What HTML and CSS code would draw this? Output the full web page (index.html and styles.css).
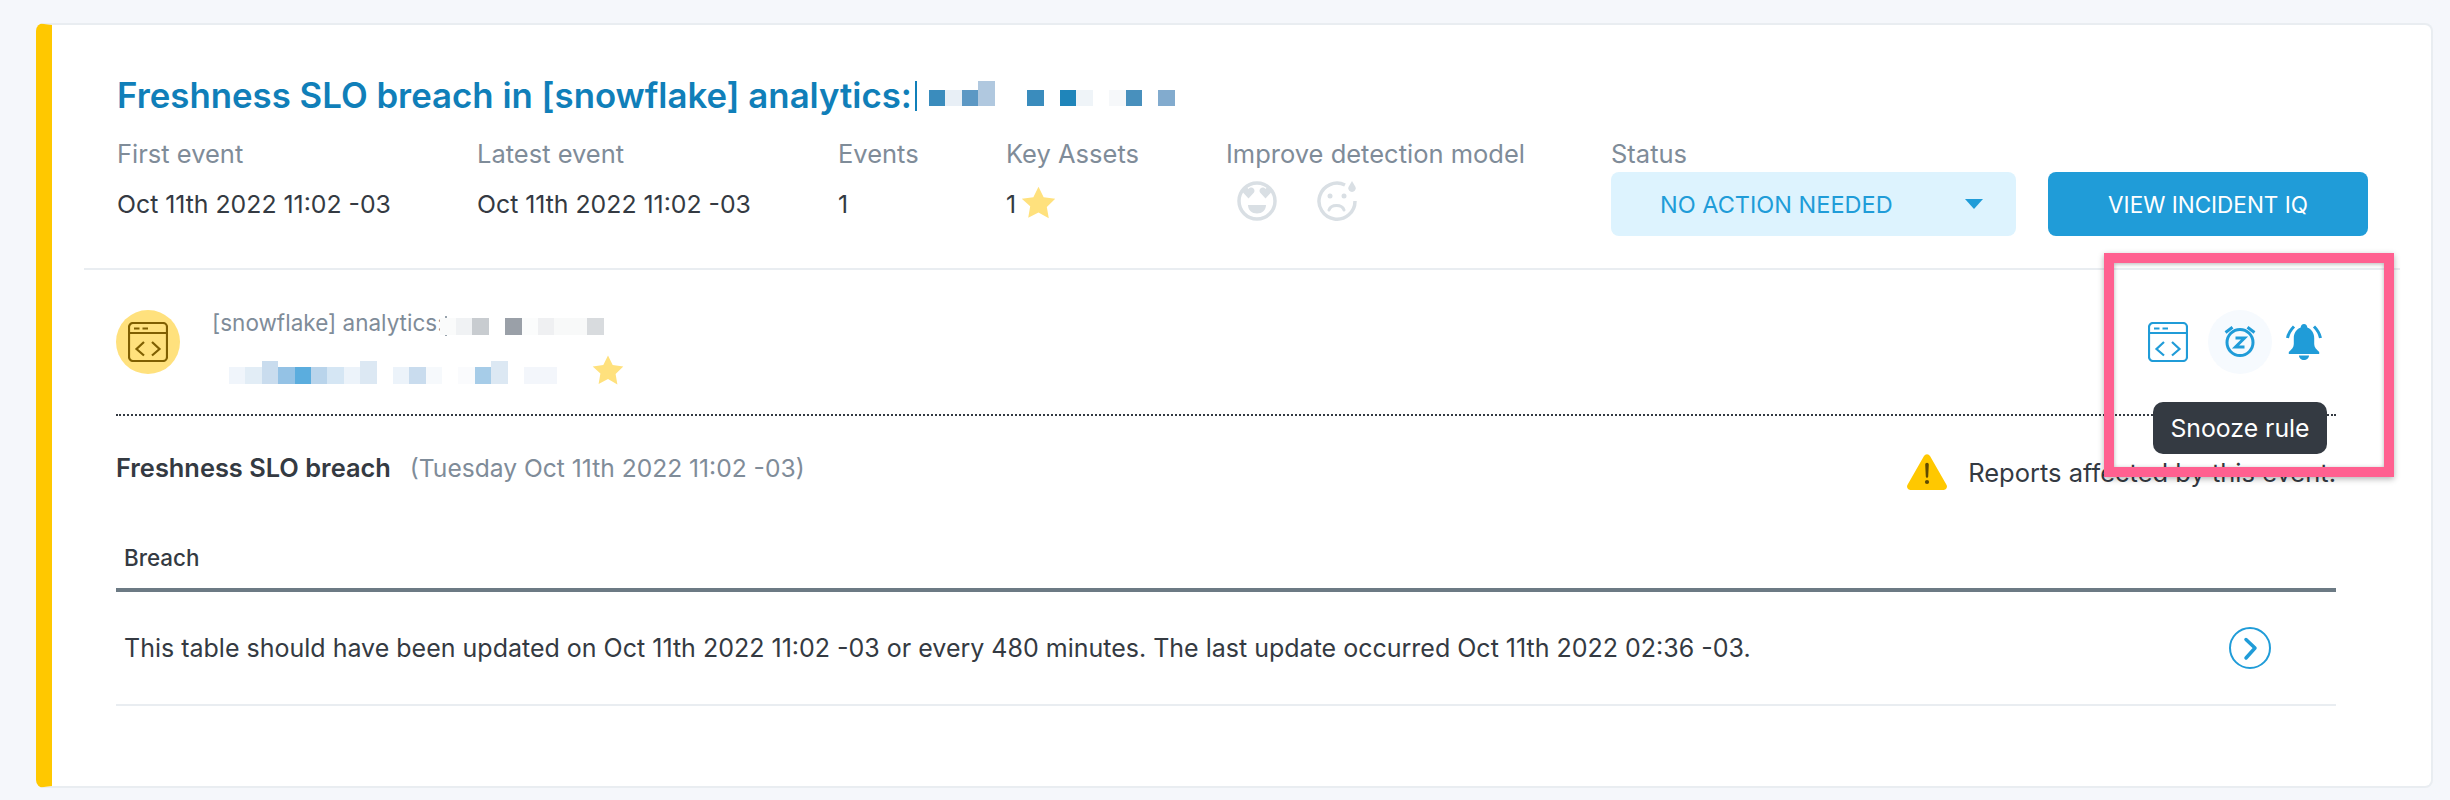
FILE: index.html
```html
<!DOCTYPE html>
<html lang="en">
<head>
<meta charset="utf-8">
<title>Freshness SLO breach</title>
<link rel="stylesheet" href="styles.css">
</head>
<body>
<main class="page">
  <article class="card">
    <header class="head">
      <h1 class="title">
        <span>Freshness SLO breach in [snowflake] analytics:</span><i class="stem"></i>
        <span class="blur title-blur">
          <i class="px t1"></i><i class="px t2"></i><i class="px t3"></i><i class="px tall t4"></i><i class="px"></i><i class="px"></i><i class="px t1"></i><i class="px"></i><i class="px t5"></i><i class="px t6"></i><i class="px"></i><i class="px t7"></i><i class="px t8"></i><i class="px"></i><i class="px t9"></i>
        </span>
      </h1>
      <div class="meta">
        <div class="col col-first"><div class="label">First event</div><div class="value">Oct 11th 2022 11:02 -03</div></div>
        <div class="col col-latest"><div class="label">Latest event</div><div class="value">Oct 11th 2022 11:02 -03</div></div>
        <div class="col col-events"><div class="label">Events</div><div class="value">1</div></div>
        <div class="col col-assets"><div class="label">Key Assets</div><div class="value"><span>1</span>
          <svg class="star star-small" viewBox="0 0 32 30"><path d="M16 .5l4.7 9.6 10.6 1.5-7.7 7.4 1.8 10.500L16 24.100 6.600 29l1.800-10.500L.700 11.600l10.600-1.500z"/></svg></div></div>
        <div class="col col-model"><div class="label">Improve detection model</div>
          <div class="faces">
            <svg class="face" viewBox="0 0 40 40"><circle cx="20" cy="20" r="18" class="face-line"/><path class="face-fill" d="M11.500 17.500L6 11.500C4 8 8.500 4.500 11.500 8c3-3.500 7.500 0 5.500 3.500zM28.500 17.500l-5.500-6c-2-3.500 2.500-7 5.500-3.500 3-3.500 7.500 0 5.500 3.500zM11 24h18c0 5-4 8.500-9 8.500S11 29 11 24z"/></svg>
            <svg class="face" viewBox="0 0 40 40"><path class="face-line" d="M28 4A18 18 0 1 0 38 20"/><circle class="face-fill" cx="13" cy="15" r="2.500"/><circle class="face-fill" cx="27" cy="15" r="2.500"/><path class="face-line thin" d="M12 29c2-6 13-6 15 0"/><path class="face-fill" d="M35 0l3.500 6a3.700 3.700 0 1 1-7 0z"/></svg>
          </div>
        </div>
        <div class="col col-status"><div class="label label-tight">Status</div>
          <div class="actions-row">
            <div class="select"><span>NO ACTION NEEDED</span><i class="caret"></i></div>
            <button class="btn" type="button">VIEW INCIDENT IQ</button>
          </div>
        </div>
      </div>
    </header>

    <section class="body">
      <div class="asset">
        <div class="avatar">
          <svg class="win win-dark" viewBox="0 0 40 40"><rect x="1" y="1" width="38" height="38" rx="4"/><path d="M1 11h38M6 6.500h5.500M14.500 6.500H20M16 20l-7.500 7L16 33.500M24 20l7.500 7L24 33.500"/></svg>
        </div>
        <div class="asset-text">
          <div class="asset-name"><span>[snowflake] analytics:</span><i class="stem stem-name"></i>
            <span class="blur name-blur"><i class="px g0"></i><i class="px g1"></i><i class="px g2"></i><i class="px"></i><i class="px g3"></i><i class="px g4"></i><i class="px g5"></i><i class="px g6"></i><i class="px g6"></i><i class="px g7"></i></span>
          </div>
          <div class="asset-table">
            <span class="blur table-blur"><i class="px b1"></i><i class="px b2"></i><i class="px tall b3"></i><i class="px b4"></i><i class="px b5"></i><i class="px b6"></i><i class="px b7"></i><i class="px b8"></i><i class="px tall b9"></i><i class="px"></i><i class="px b8"></i><i class="px b3"></i><i class="px b10"></i><i class="px"></i><i class="px b11"></i><i class="px b12"></i><i class="px tall b9"></i><i class="px"></i><i class="px b13"></i><i class="px b13"></i></span>
            <svg class="star star-large" viewBox="0 0 32 30"><path d="M16 .5l4.700 9.600 10.600 1.500-7.700 7.400 1.800 10.500L16 24.100 6.600 29l1.800-10.500L.7 11.600l10.600-1.500z"/></svg>
          </div>
        </div>
        <div class="tools">
          <div class="tool tool-first">
            <svg class="win win-blue" viewBox="0 0 40 40"><rect x="1" y="1" width="38" height="38" rx="4"/><path d="M1 11h38M6 6.500h5.500M14.500 6.500H20M16 20l-7.500 7L16 33.500M24 20l7.500 7L24 33.500"/></svg>
          </div>
          <div class="tool tool-active">
            <svg class="snooze" viewBox="0 0 32 32"><circle cx="16" cy="16.500" r="13"/><path d="M1.500 6.500L8.500 1.300M30.500 6.500l-7-5.200"/><path class="zed" d="M11.500 12h9L11.500 21h9"/></svg>
            <div class="tooltip">Snooze rule</div>
          </div>
          <div class="tool">
            <svg class="bell" viewBox="0 0 36 36"><path class="bell-body" d="M18 0c-2 0-3.300 1.500-3.300 3.600C10 5.500 7.800 9.500 7.800 14v6c0 3-2 5.500-5 8v2h30.400v-2c-3-2.500-5-5-5-8v-6c0-4.500-2.200-8.500-6.900-10.400C21.300 1.500 20 0 18 0zM13 31.500h10c0 2.500-2.200 4.500-5 4.500s-5-2-5-4.500z"/><path class="bell-wave" d="M1.500 14C2.500 9 5 5.500 8 2.500M34.500 14C33.500 9 31 5.500 28 2.500"/></svg>
          </div>
        </div>
      </div>

      <div class="event">
        <div class="event-title"><strong>Freshness SLO breach</strong><span>(Tuesday Oct 11th 2022 11:02 -03)</span></div>
        <div class="event-note">
          <svg class="warn" viewBox="0 0 40 36"><path class="warn-bg" d="M17 2a3.500 3.500 0 0 1 6 0l16.300 28.500A3.500 3.500 0 0 1 36.300 36H3.700a3.500 3.500 0 0 1-3-5.500z"/><path class="warn-mark" d="M18.200 10.500a1.800 1.800 0 0 1 3.600 0l-.6 12a1.200 1.200 0 0 1-2.400 0z"/><circle class="warn-mark" cx="20" cy="28" r="2.100"/></svg>
          <span>Reports affected by this event.</span>
        </div>
      </div>

      <div class="table-head">Breach</div>
      <div class="table-row">
        <span>This table should have been updated on Oct 11th 2022 11:02 -03 or every 480 minutes. The last update occurred Oct 11th 2022 02:36 -03.</span>
        <svg class="go" viewBox="0 0 42 42"><circle cx="21" cy="21" r="20"/><path d="M17 12.500l9 8.500-9 10"/></svg>
      </div>
    </section>
  </article>
  <div class="highlight"></div>
</main>
</body>
</html>
```

FILE: styles.css
```css
* { box-sizing: border-box; }
html, body { margin: 0; padding: 0; }
body {
  background: #f5f7fb;
  font-family: Inter, Roboto, "Liberation Sans", sans-serif;
  color: #343a42;
  height: 800px;
  overflow: hidden;
}
.page { position: relative; padding: 23px 17px 0 36px; }
.card {
  background: #fff;
  border: 2px solid #e9edf1;
  border-left: 16px solid #ffc800;
  border-radius: 8px;
  padding: 0 31px 80px 32px;
}

/* header */
.head { border-bottom: 2px solid #e9edf1; padding: 48px 32px 32px 33px; height: 245px; }
.title {
  display: flex;
  align-items: flex-end;
  margin: 0;
  height: 44px;
  line-height: 44px;
  font-size: 34.8px;
  font-weight: 600;
  color: #107fb9;
  white-space: nowrap;
}
.stem { display: block; flex: none; width: 2px; height: 30px; margin: 0 0 6px 3px; background: #107fb9; }
.stem-name { width: 2px; height: 20px; margin: 0 0 1px 1px; background: #98a3ad; }
.blur { display: flex; align-items: flex-end; }
.px { display: block; width: 16.4px; height: 16px; flex: none; }
.tall { height: 25px; }
.title-blur { margin: 0 0 11px 12px; }
.t1 { background: #3a8cbd; } .t2 { background: #e8eff6; } .t3 { background: #5c98c4; }
.t4 { background: #b0c8df; } .t5 { background: #1f85ba; } .t6 { background: #eff4f8; }
.t7 { background: #f6f8fa; } .t8 { background: #4890bd; } .t9 { background: #82abce; }

.meta { display: flex; margin-top: 20px; }
.col { flex: none; }
.col-first { width: 360px; }
.col-latest { width: 361px; }
.col-events { width: 168px; }
.col-assets { width: 220px; }
.col-model { width: 385px; }
.label { font-size: 25.5px; line-height: 32px; color: #7f8c99; white-space: nowrap; position: relative; top: 1px; }
.label-tight { margin-bottom: 3px; }
.value {
  display: flex;
  align-items: center;
  height: 64px;
  margin-top: 3px;
  font-size: 24.8px;
  white-space: nowrap;
}
.star { fill: #ffe17d; display: block; flex: none; }
.star-small { width: 35px; height: 33px; margin: -3px 0 0 5px; }
.star-large { width: 32px; height: 30px; margin-left: 35px; }
.faces { display: flex; gap: 40px; margin: 12px 0 0 11px; }
.face { width: 40px; height: 40px; display: block; }
.face-line { fill: none; stroke: #d9dfe4; stroke-width: 3.5; }
.face-line.thin { stroke-width: 3; stroke-linecap: round; }
.face-fill { fill: #d9dfe4; }

.actions-row { display: flex; gap: 32px; }
.select {
  display: flex;
  align-items: center;
  justify-content: space-between;
  width: 405px;
  height: 64px;
  padding: 0 33px 0 49px;
  background: #ddf3fe;
  border-radius: 8px;
  color: #209cd8;
  font-size: 23.5px;
}
.caret { width: 0; height: 0; border: 9.5px solid transparent; border-top: 10px solid #209cd8; border-bottom: 0; }
.btn {
  width: 320px;
  height: 64px;
  border: 0;
  border-radius: 8px;
  background: #209cd8;
  color: #fff;
  font: 400 22.5px Inter, Roboto, "Liberation Sans", sans-serif;
}

/* body */
.body { padding: 0 64px 0 32px; }
.asset { display: flex; height: 146px; padding: 40px 0; border-bottom: 2px dotted #343a42; }
.avatar {
  width: 64px;
  height: 64px;
  border-radius: 50%;
  background: #ffe17d;
  display: flex;
  align-items: center;
  justify-content: center;
  flex: none;
}
.win { width: 40px; height: 40px; display: block; fill: none; stroke-width: 2.2; }
.win-dark { stroke: #7f5f01; }
.win-blue { stroke: #209cd8; }
.asset-text { margin: -1px 0 0 32px; }
.asset-name {
  display: flex;
  align-items: flex-end;
  height: 28px;
  line-height: 28px;
  font-size: 22.5px;
  color: #7f8c99;
  white-space: nowrap;
}
.name-blur { margin: 0 0 2px -7px; }
.name-blur .px { height: 17px; }
.g0 { background: #fafbfb; } .g1 { background: #f0f2f4; } .g2 { background: #c8ccd0; }
.g3 { background: #9aa0a8; } .g4 { background: #fbfcfc; } .g5 { background: #eff0f2; }
.g6 { background: #f8f9f9; } .g7 { background: #d8dbde; }
.asset-table { display: flex; align-items: flex-end; height: 30px; margin: 18px 0 0 17px; }
.table-blur { margin-bottom: 1px; }
.table-blur .px { height: 17px; }
.table-blur .tall { height: 23px; }
.b1 { background: #f0f5fb; } .b2 { background: #e2edf6; } .b3 { background: #c9dcee; }
.b4 { background: #94c2e5; } .b5 { background: #5badde; } .b6 { background: #b9d4eb; }
.b7 { background: #d5e6f4; } .b8 { background: #ecf3fa; } .b9 { background: #dce8f3; }
.b10 { background: #f6f9fc; } .b11 { background: #fafbfd; } .b12 { background: #a6cce8; }
.b13 { background: #f3f6fb; }

.tools { display: flex; margin-left: auto; }
.tool {
  position: relative;
  width: 64px;
  height: 64px;
  display: flex;
  align-items: center;
  justify-content: center;
  border-radius: 50%;
}
.tool-first { margin-right: 8px; }
.tool-active { background: #f6fafe; }
.snooze { width: 32px; height: 32px; display: block; fill: none; stroke: #209cd8; stroke-width: 3; }
.bell { width: 36px; height: 36px; display: block; }
.bell-body { fill: #209cd8; }
.bell-wave { fill: none; stroke: #209cd8; stroke-width: 3; }
.tooltip {
  position: absolute;
  top: 92px;
  left: 50%;
  transform: translateX(-50%);
  width: 174px;
  height: 52px;
  line-height: 52px;
  text-align: center;
  background: #343a42;
  color: #fff;
  border-radius: 10px;
  font-size: 24.8px;
  white-space: nowrap;
}

.event { display: flex; justify-content: space-between; align-items: flex-start; margin-top: 36px; }
.event-title { display: flex; gap: 19px; font-size: 24.6px; line-height: 32px; white-space: nowrap; }
.event-title strong { font-size: 25.4px; font-weight: 600; }
.event-title span { color: #7f8c99; }
.event-note { display: flex; align-items: center; gap: 21px; height: 36px; margin-top: 2px; font-size: 25.5px; white-space: nowrap; }
.warn { width: 40px; height: 36px; display: block; }
.warn-bg { fill: #ffc800; }
.warn-mark { fill: #5f4a00; }

.table-head {
  margin-top: 54px;
  padding: 0 0 16px 8px;
  line-height: 28px;
  font-size: 22.4px;
  font-weight: 500;
  border-bottom: 4px solid #6c7a84;
}
.table-row {
  display: flex;
  align-items: center;
  justify-content: space-between;
  height: 114px;
  padding: 0 65px 0 8px;
  border-bottom: 2px solid #e9edf1;
  font-size: 25px;
  white-space: nowrap;
}
.go { width: 42px; height: 42px; display: block; fill: none; stroke: #209cd8; }
.go circle { stroke-width: 2; }
.go path { stroke-width: 3.5; stroke-linecap: round; stroke-linejoin: round; }

/* annotation drawn on top of the screenshot */
.highlight {
  position: absolute;
  left: 2104px;
  top: 253px;
  width: 290px;
  height: 224px;
  border: 10px solid #ff6090;
  box-shadow: 0 2px 6px rgba(0, 0, 0, .3), inset 0 1px 4px rgba(0, 0, 0, .3);
}
```
